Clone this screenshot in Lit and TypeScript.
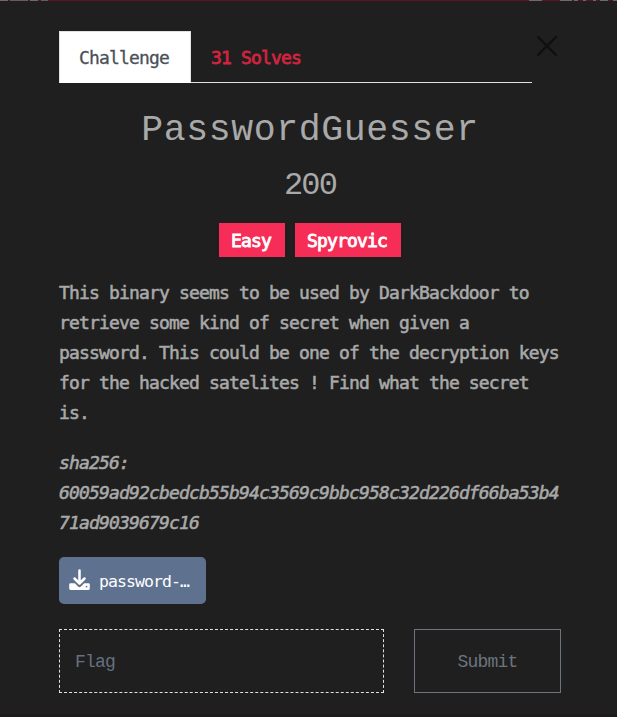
import { LitElement, html, css } from "lit";
import { customElement } from "lit/decorators.js";

@customElement("app-root")
export class AppRoot extends LitElement {
  static styles = css`
    :host {
      display: block;
      box-sizing: border-box;
      width: 617px;
      height: 717px;
      overflow: hidden;
      background: linear-gradient(#1f1f1f 0 714px, #1e191b 714px);
      color: #a9a9a9;
      font-family: "DejaVu Sans Mono", "Liberation Mono", monospace;
      font-size: 18px;
      letter-spacing: -0.84px;
    }
    * { box-sizing: border-box; }
    .strip {
      height: 1px;
      background: linear-gradient(90deg, #6f6a6a 0 8px, #5e1323 8px 10px, #6a5a5e 10px 28px, #5e1323 28px 30px, #6f6a6a 30px 38px, #5e1323 38px 41px, #6a5a5e 41px 48px, #5e1323 48px 529px, #77676b 529px 542px, #5e1323 542px 560px, #6f6a6a 560px 572px, #5e1323 572px 574px, #6f6a6a 574px 578px, #5e1323 578px 583px, #6f6a6a 583px 586px, #5e1323 586px 593px, #6f6a6a 593px 596px, #5e1323 596px 600px, #6f6a6a 600px 608px, #5e1323 608px 613px, #6f6a6a 613px);
    }
    .panel { padding: 30px 56px 0 59px; }
    .head { display: flex; justify-content: space-between; height: 52px; }
    .tabs { display: flex; width: 473px; border-bottom: 1px solid #dee2e6; }
    .tab { height: 52px; line-height: 51px; padding: 1px 20px 0; white-space: pre; }
    .active {
      width: 132px;
      border: 1px solid #dee2e6;
      border-bottom-color: #fff;
      padding: 0 0 0 19px;
      background: #fff;
      color: #495057;
      -webkit-text-stroke: 0.3px #495057;
    }
    .solves { color: #d0243f; -webkit-text-stroke: 0.8px #d0243f; }
    .close { width: 22px; height: 22px; margin: 4px 3px 0 0; display: block; }
    h2, h3, p { margin: 0; font-weight: 400; }
    h2, h3 { text-align: center; font-family: "Liberation Mono", monospace; }
    h2 { font-size: 36.5px; letter-spacing: 0.6px; line-height: 44px; margin-top: 26px; }
    h3 { font-size: 32px; letter-spacing: -1.9px; line-height: 40px; margin-top: 13px; }
    .tags { display: flex; justify-content: center; gap: 10px; margin-top: 17px; }
    .tag {
      width: 66px;
      height: 34px;
      line-height: 35px;
      padding-left: 12px;
      background: #f62d56;
      color: #fff;
      -webkit-text-stroke: 0.9px #fff;
      white-space: pre;
    }
    .tag + .tag { width: 106px; }
    .text { line-height: 30px; white-space: pre; -webkit-text-stroke: 0.55px #a9a9a9; }
    .desc { margin-top: 21px; }
    .hash { margin-top: 20px; font-style: italic; }
    .file {
      display: flex;
      align-items: center;
      width: 147px;
      height: 47px;
      margin-top: 19px;
      padding-left: 10px;
      gap: 9px;
      border-radius: 5px;
      background: #5e7290;
      color: #fff;
      font-size: 16.5px;
      letter-spacing: -0.93px;
      white-space: pre;
    }
    .file svg { width: 21px; height: 21px; flex: none; margin-top: -2px; }
    .file span { padding-top: 1px; }
    .form { display: flex; gap: 30px; margin-top: 25px; font-family: "Liberation Mono", monospace; letter-spacing: -0.8px; }
    .form > * {
      height: 64px;
      margin: 0;
      border-radius: 0;
      background: transparent;
      font: inherit;
      letter-spacing: inherit;
      color: #6c757d;
    }
    .flag { width: 325px; border: 1px dashed #dee2e6; padding: 2px 15px 0; }
    .flag::placeholder { color: #667080; opacity: 1; }
    .submit { width: 147px; border: 1px solid #6c757d; padding: 2px 0 0; }
  `;

  render() {
    return html`
      <div class="strip"></div>
      <div class="panel">
        <div class="head">
          <div class="tabs">
            <div class="tab active">Challenge</div>
            <div class="tab solves">31 Solves</div>
          </div>
          <svg class="close" viewBox="0 0 22 22" fill="none" stroke="#101010" stroke-width="2.4" stroke-linecap="round">
            <path d="M2 2 20 20M20 2 2 20" />
          </svg>
        </div>
        <h2>PasswordGuesser</h2>
        <h3>200</h3>
        <div class="tags"><span class="tag">Easy</span><span class="tag">Spyrovic</span></div>
        <p class="text desc">This binary seems to be used by DarkBackdoor to
retrieve some kind of secret when given a
password. This could be one of the decryption keys
for the hacked satelites ! Find what the secret
is.</p>
        <p class="text hash">sha256:
60059ad92cbedcb55b94c3569c9bbc958c32d226df66ba53b4
71ad9039679c16</p>
        <div class="file">
          <svg viewBox="0 0 21 21">
            <path d="M10.5 1.5V14M5.5 9.5l5 5 5-5" fill="none" stroke="#fff" stroke-width="2.5" stroke-linecap="round" stroke-linejoin="round" />
            <path d="M1.5 14.3h4.3l3.2 3.1a2.1 2.1 0 0 0 3 0l3.2-3.1h4.3a1.3 1.3 0 0 1 1.3 1.3v4a1.3 1.3 0 0 1-1.3 1.3h-18A1.3 1.3 0 0 1 .2 19.6v-4a1.3 1.3 0 0 1 1.3-1.3z" fill="#fff" />
            <circle cx="17.5" cy="17.6" r=".9" fill="#5e7290" />
          </svg>
          <span>password-…</span>
        </div>
        <div class="form">
          <input class="flag" placeholder="Flag" />
          <button class="submit">Submit</button>
        </div>
      </div>
    `;
  }
}
